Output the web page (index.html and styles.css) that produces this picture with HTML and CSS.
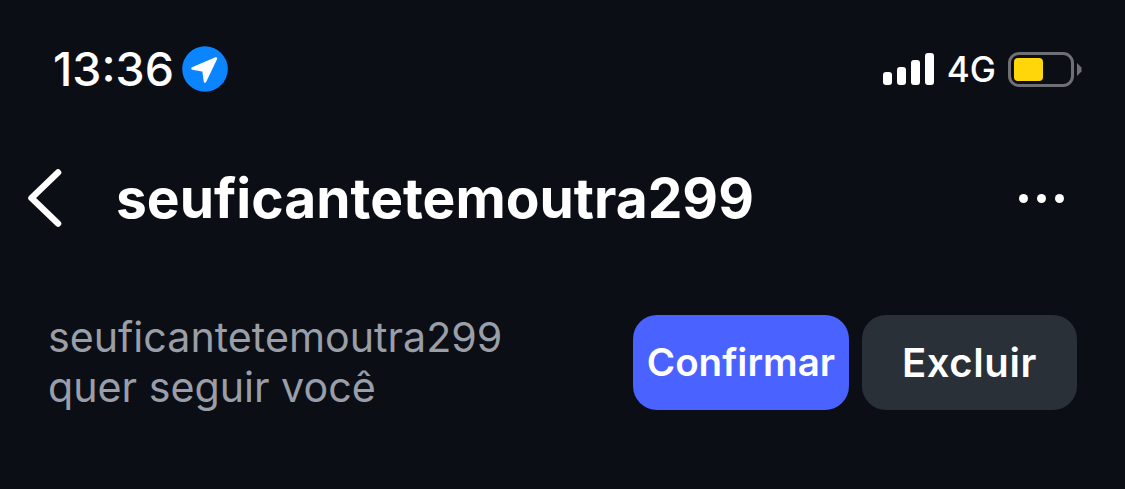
FILE: index.html
```html
<!DOCTYPE html>
<html lang="pt">
<head>
<meta charset="utf-8">
<title>seuficantetemoutra299</title>
<link rel="stylesheet" href="styles.css">
</head>
<body>
<div class="status">
  <div class="status-left">
    <span class="time">13:36</span>
    <svg class="loc" width="46" height="46" viewBox="0 0 46 46"><circle cx="23" cy="23" r="22.8" fill="#0a84ff"/><path d="M34 12.5 L10.5 22.5 L21.5 24.5 L23 35.5 Z" fill="#fff" stroke="#fff" stroke-width="2.5" stroke-linejoin="round"/></svg>
  </div>
  <div class="status-right">
    <div class="signal"><i class="b1"></i><i class="b2"></i><i class="b3"></i><i class="b4"></i></div>
    <span class="net">4G</span>
    <div class="battery"><div class="shell"><div class="fill"></div></div><svg class="nub" width="5" height="13" viewBox="0 0 5 13"><path d="M0 0 L4.5 4.5 V8.5 L0 13 Z" fill="#6f7075"/></svg></div>
  </div>
</div>
<div class="nav">
  <svg class="back" width="34" height="58" viewBox="0 0 34 58"><path d="M30 3.5 L3.5 29 L30 54.5" fill="none" stroke="#fff" stroke-width="6.5" stroke-linecap="round" stroke-linejoin="round"/></svg>
  <h1 class="title">seuficantetemoutra299</h1>
  <div class="more"><i></i><i></i><i></i></div>
</div>
<div class="request">
  <p class="msg">seuficantetemoutra299<br>quer seguir você</p>
  <div class="actions">
    <button class="btn primary">Confirmar</button>
    <button class="btn secondary">Excluir</button>
  </div>
</div>
</body>
</html>
```
FILE: styles.css
```css
* { box-sizing: border-box; }
html, body { margin: 0; height: 100%; }
body { background: #0b0e14; color: #fff; font-family: Inter, "Liberation Sans", sans-serif; overflow: hidden; padding-top: 46px; }
.status { display: flex; justify-content: space-between; align-items: center; height: 46px; padding: 0 43px 0 53px; }
.status-left { display: flex; align-items: center; gap: 8px; }
.time { font-size: 46.5px; font-weight: 500; line-height: 46px; }
.status-right { display: flex; align-items: center; }
.signal { display: flex; align-items: flex-end; gap: 5px; height: 32px; margin-right: 13px; }
.signal i { display: block; width: 9px; background: #fff; border-radius: 3px; }
.b1 { height: 13px; }
.b2 { height: 18px; }
.b3 { height: 25px; }
.b4 { height: 32px; }
.net { font-size: 35px; font-weight: 500; line-height: 36px; margin-right: 12px; }
.battery { display: flex; align-items: center; gap: 3px; }
.shell { width: 66px; height: 35px; border: 3px solid #6f7075; border-radius: 11px; padding: 3px; }
.fill { width: 29px; height: 100%; background: #ffd60a; border-radius: 4px; }
.nub { display: block; }
.nav { display: flex; align-items: center; height: 60px; margin-top: 76px; padding: 0 61px 0 28px; }
.back { flex: none; }
.title { flex: 1; margin: 0 0 0 54px; font-size: 55.1px; font-weight: 700; line-height: 60px; }
.more { display: flex; gap: 9px; }
.more i { display: block; width: 9px; height: 9px; border-radius: 50%; background: #fff; }
.request { display: flex; justify-content: space-between; align-items: center; margin-top: 84px; padding: 0 48px 0 48px; }
.msg { margin: 0; color: #9a9ea9; font-size: 41.2px; line-height: 50px; }
.actions { display: flex; gap: 13px; }
.btn { height: 95px; border: 0; border-radius: 24px; color: #fff; font-family: inherit; font-weight: 600; padding: 0; }
.primary { width: 216px; background: #4a62ff; font-size: 38.5px; }
.secondary { width: 215px; background: #2a3038; font-size: 40px; letter-spacing: 0.6px; }
```
